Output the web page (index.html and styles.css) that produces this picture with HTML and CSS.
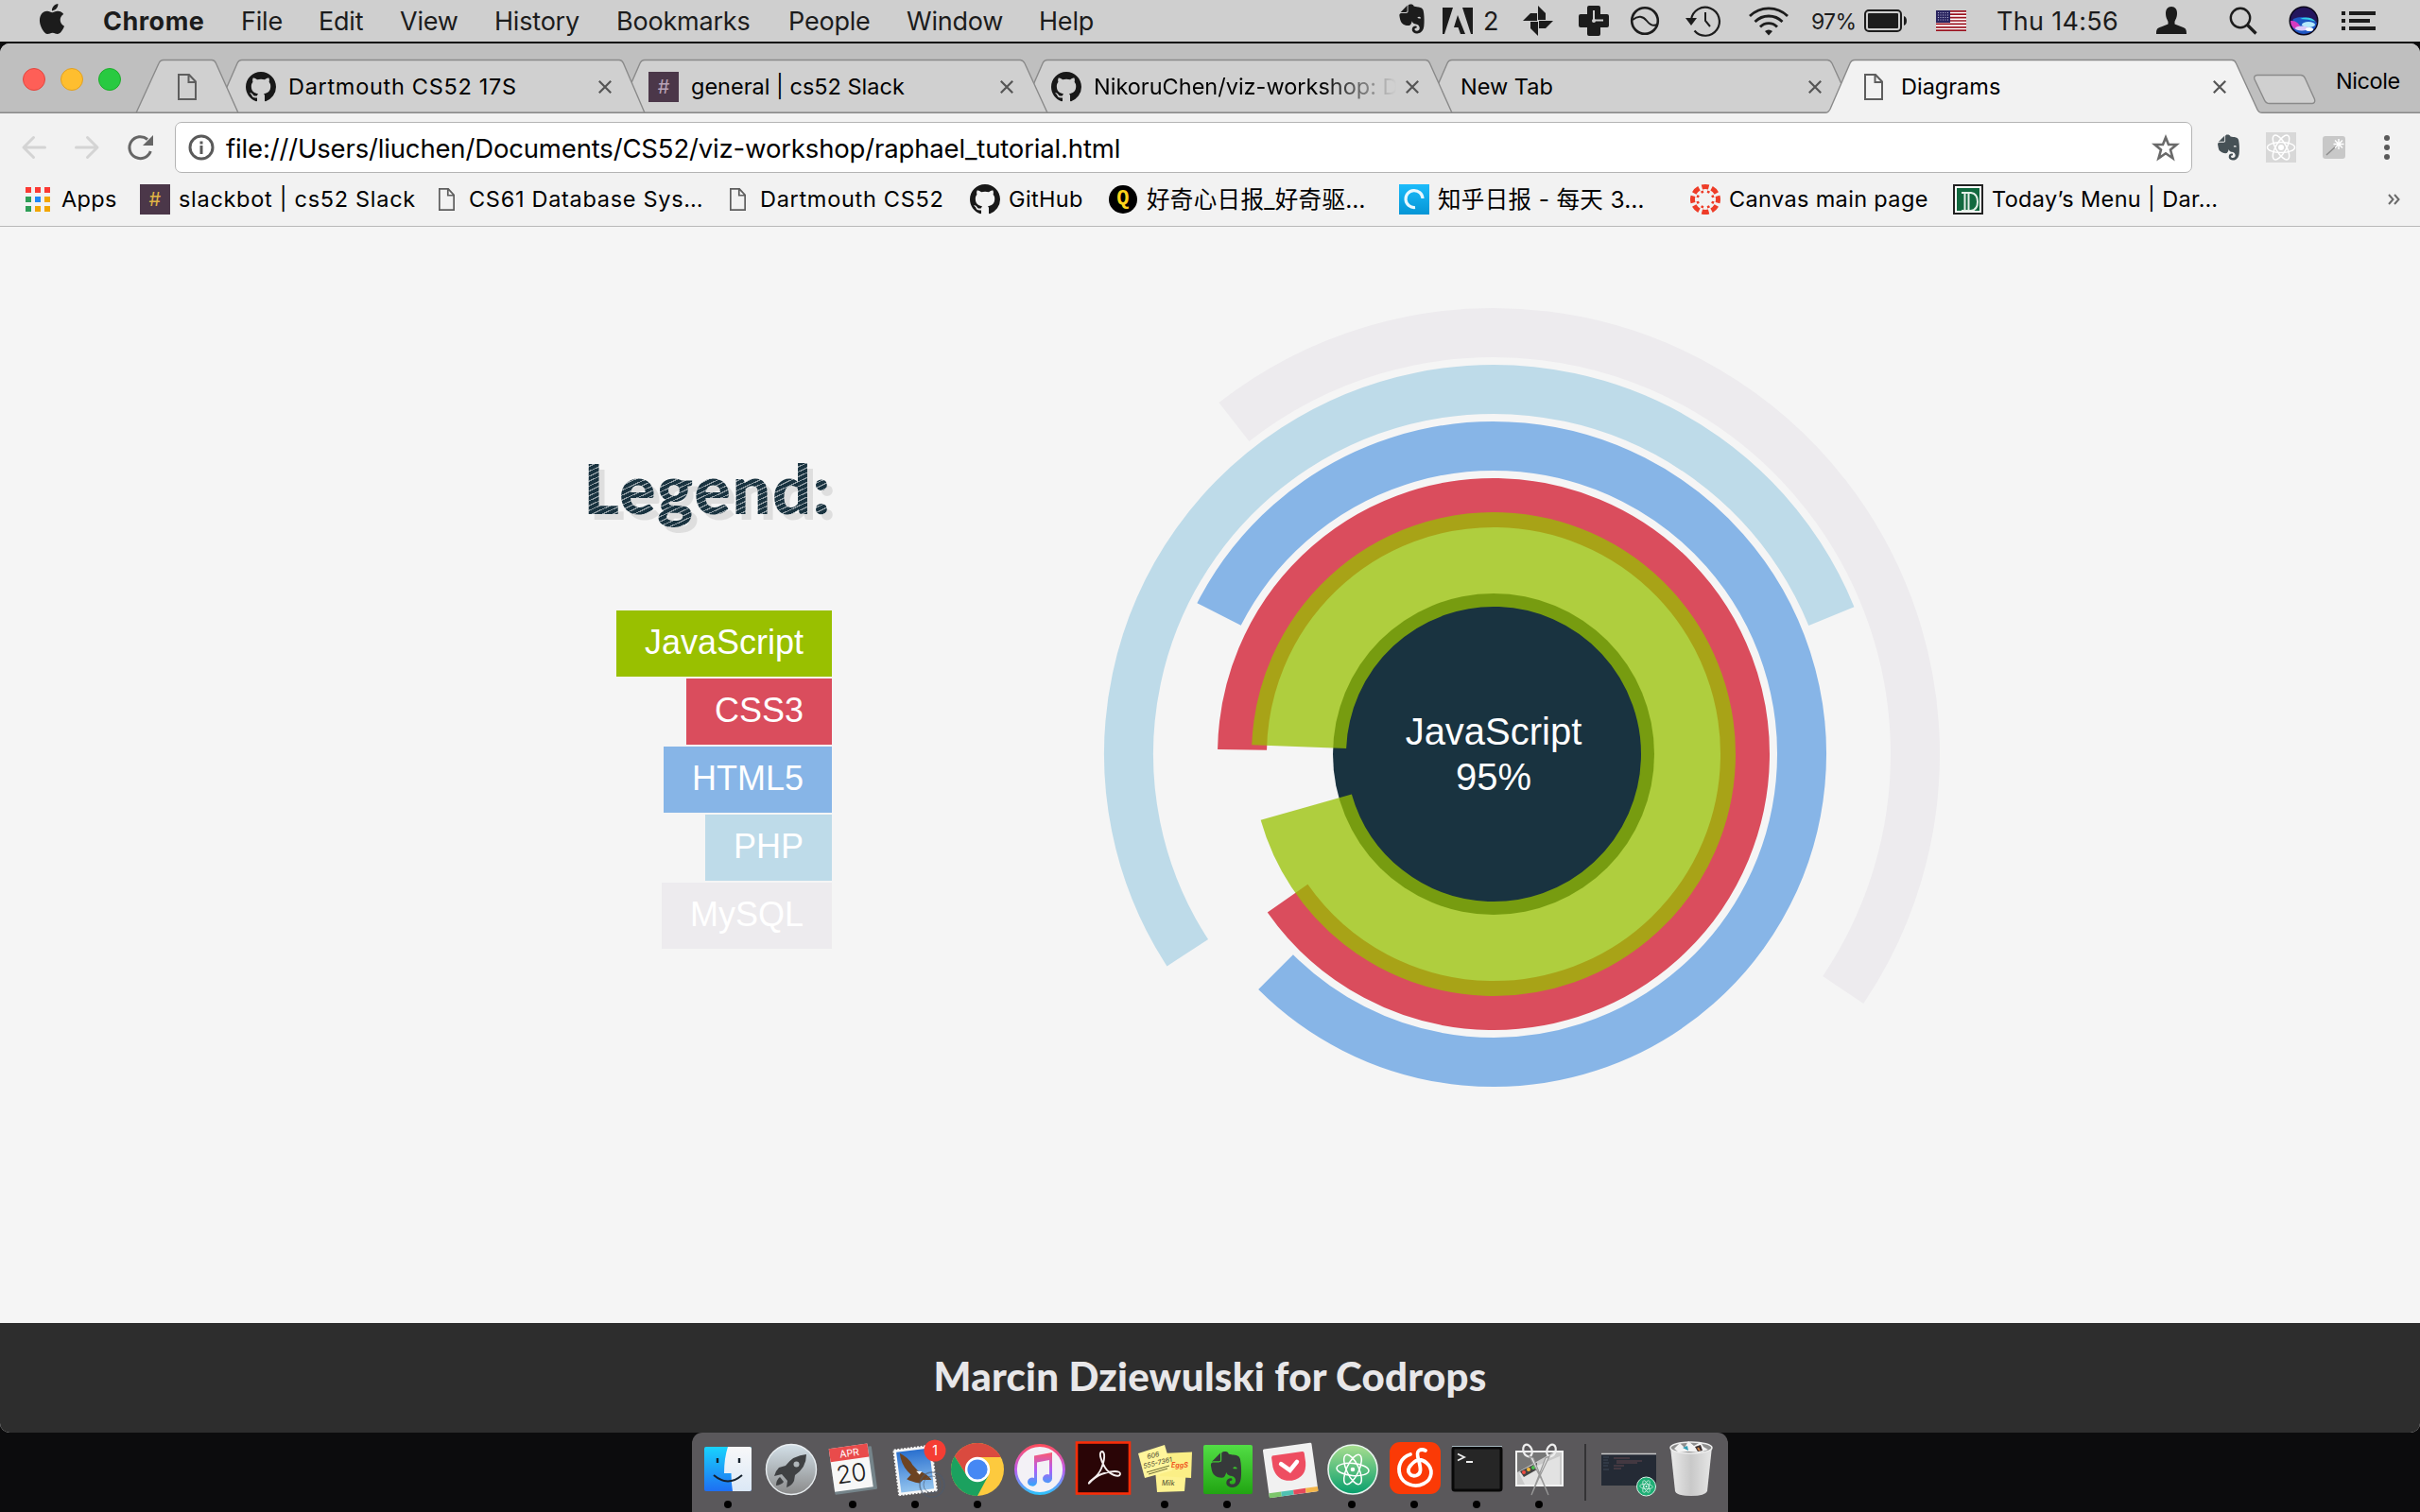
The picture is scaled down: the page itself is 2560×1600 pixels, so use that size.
FILE: index.html
```html
<!DOCTYPE html>
<html lang="en">
<head>
<meta charset="utf-8">
<title>Diagrams</title>
<link rel="stylesheet" href="styles.css">
</head>
<body>
<svg class="defs" width="0" height="0" aria-hidden="true">
  <defs>
    <symbol id="github" viewBox="0 0 16 16"><path d="M8 0C3.58 0 0 3.58 0 8c0 3.54 2.29 6.53 5.47 7.59.4.07.55-.17.55-.38 0-.19-.01-.82-.01-1.49-2.01.37-2.53-.49-2.69-.94-.09-.23-.48-.94-.82-1.13-.28-.15-.68-.52-.01-.53.63-.01 1.08.58 1.23.82.72 1.21 1.87.87 2.33.66.07-.52.28-.87.51-1.07-1.78-.2-3.64-.89-3.64-3.95 0-.87.31-1.59.82-2.15-.08-.2-.36-1.02.08-2.12 0 0 .67-.21 2.2.82.64-.18 1.32-.27 2-.27s1.36.09 2 .27c1.53-1.04 2.2-.82 2.2-.82.44 1.1.16 1.92.08 2.12.51.56.82 1.27.82 2.15 0 3.07-1.87 3.75-3.65 3.95.29.25.54.73.54 1.48 0 1.07-.01 1.93-.01 2.2 0 .21.15.46.55.38A8.01 8.01 0 0 0 16 8c0-4.42-3.58-8-8-8z"/></symbol>
    <symbol id="evernote" viewBox="0 0 24 24"><path d="M8.222 5.393c0 .239-.02.637-.256.895-.257.24-.652.259-.888.259H4.552c-.73 0-1.165 0-1.46.04-.159.02-.356.1-.455.14-.04.019-.04 0-.02-.02L8.38.796c.02-.02.04-.02.02.02-.04.099-.118.298-.138.457-.04.298-.04.736-.04 1.472v2.647zm5.348 17.869c-.67-.438-1.026-1.015-1.164-1.373a2.924 2.924 0 0 1-.217-1.095 3.007 3.007 0 0 1 3-3.004c.493 0 .888.398.888.895a.88.88 0 0 1-.454.776c-.099.06-.237.1-.336.12-.098.02-.473.06-.65.218-.198.16-.356.418-.356.697 0 .298.118.577.316.776.355.358.829.557 1.342.557a2.436 2.436 0 0 0 2.427-2.447c0-1.214-.809-2.29-1.875-2.766-.158-.08-.414-.14-.651-.2a8.04 8.04 0 0 0-.592-.1c-.829-.1-2.901-.755-3.04-2.605 0 0-.611 2.785-1.835 3.54-.118.06-.276.12-.454.16-.177.04-.374.06-.434.06-1.993.12-4.105-.517-5.565-2.03 0 0-.987-.815-1.5-3.103-.118-.558-.355-1.553-.493-2.488-.06-.338-.08-.597-.099-.836 0-.975.592-1.631 1.342-1.73h4.026c.69 0 1.086-.18 1.342-.42.336-.317.415-.775.415-1.312V1.354C9.05.617 9.703 0 10.669 0h.474c.197 0 .434.02.651.04.158.02.296.06.533.12 1.204.298 1.46 1.532 1.46 1.532s2.27.398 3.415.597c1.085.199 3.77.378 4.282 3.104 1.204 6.487.474 12.775.415 12.775-.849 6.129-5.901 5.83-5.901 5.83a4.1 4.1 0 0 1-2.428-.736zm4.54-13.034c-.652-.06-1.204.2-1.402.697-.04.1-.079.219-.059.278.02.06.06.08.099.1.237.12.631.179 1.204.239.572.06.967.1 1.223.06.04 0 .08-.02.119-.08.04-.06.02-.18.02-.278-.06-.557-.553-.936-1.204-1.016z"/></symbol>
    <symbol id="page" viewBox="0 0 20 28"><path d="M1 1H12L19 8.500V27H1ZM11.500 1V9H19" fill="none" stroke="#5e5e5e" stroke-width="2"/></symbol>
    <symbol id="close" viewBox="0 0 14 14"><path d="M.8.800 13.200 13.200M13.200.800.800 13.200" fill="none" stroke="#555" stroke-width="2.200"/></symbol>
    <symbol id="atom" viewBox="-20 -20 40 40"><g fill="none" stroke="#fff" stroke-width="1.500"><ellipse rx="17" ry="6.500" transform="rotate(5)"/><ellipse rx="17" ry="6.500" transform="rotate(65)"/><ellipse rx="17" ry="6.500" transform="rotate(115)"/></g><circle r="2.300" fill="#fff"/></symbol>
    <linearGradient id="silver" x2="0" y2="1"><stop offset="0" stop-color="#d3e0e8"/><stop offset="1" stop-color="#8a8a8a"/></linearGradient>
    <linearGradient id="finderL" x2="0" y2="1"><stop offset="0" stop-color="#19d3fd"/><stop offset="1" stop-color="#1e6ff2"/></linearGradient>
    <linearGradient id="finderR" x2="0" y2="1"><stop offset="0" stop-color="#f8f8f9"/><stop offset="1" stop-color="#dbe8f6"/></linearGradient>
    <linearGradient id="ring" x2="0" y2="1"><stop offset="0" stop-color="#ff4e5f"/><stop offset=".5" stop-color="#c05cf2"/><stop offset="1" stop-color="#2fc0fb"/></linearGradient>
    <linearGradient id="note" x2="0" y2="1"><stop offset="0" stop-color="#fb5a6f"/><stop offset=".5" stop-color="#b35cf5"/><stop offset="1" stop-color="#34a8fb"/></linearGradient>
    <linearGradient id="sky" x2="0" y2="1"><stop offset="0" stop-color="#2a70cf"/><stop offset="1" stop-color="#93c4ef"/></linearGradient>
    <linearGradient id="green" x2="0" y2="1"><stop offset="0" stop-color="#52dd45"/><stop offset="1" stop-color="#21a512"/></linearGradient>
    <linearGradient id="atomBg" x2="0" y2="1"><stop offset="0" stop-color="#a9de8f"/><stop offset="1" stop-color="#079f6d"/></linearGradient>
    <linearGradient id="zhihu" x2="0" y2="1"><stop offset="0" stop-color="#1cbcfb"/><stop offset="1" stop-color="#0595d5"/></linearGradient>
    <linearGradient id="trash" x2="1"><stop offset="0" stop-color="#e9e9e9"/><stop offset=".5" stop-color="#c9c9c9"/><stop offset="1" stop-color="#e6e6e6"/></linearGradient>
  </defs>
</svg>

<header class="menubar">
  <svg class="apple" viewBox="0 0 24 24"><path d="M12.152 6.896c-.948 0-2.415-1.078-3.96-1.040-2.040.027-3.910 1.183-4.961 3.014-2.117 3.675-.546 9.103 1.519 12.090 1.013 1.454 2.208 3.090 3.792 3.039 1.520-.065 2.090-.987 3.935-.987 1.831 0 2.350.987 3.960.948 1.637-.026 2.676-1.480 3.676-2.948 1.156-1.688 1.636-3.325 1.662-3.415-.039-.013-3.182-1.221-3.220-4.857-.026-3.040 2.480-4.494 2.597-4.559-1.429-2.090-3.623-2.324-4.390-2.376-2-.156-3.675 1.090-4.610 1.090zM15.530 3.830c.843-1.012 1.400-2.427 1.245-3.830-1.207.052-2.662.805-3.532 1.818-.78.896-1.454 2.338-1.273 3.714 1.338.104 2.715-.688 3.559-1.701"/></svg>
  <b>Chrome</b><span>File</span><span>Edit</span><span>View</span><span>History</span><span>Bookmarks</span><span>People</span><span>Window</span><span>Help</span>
  <svg class="raised" width="31" height="32"><use href="#evernote" width="31" height="32"/></svg>
  <svg width="32" height="28" viewBox="0 0 32 28"><path d="M0 0H11L2 28H0ZM21 0H32V28H30ZM16 8 24 28H19L16.500 21H12Z"/></svg>
  <span>2</span>
  <svg width="32" height="32" viewBox="-16 -16 32 32"><path d="M0-1V-16L8-8V-1Z"/><path d="M1 0H16L8 8H1Z"/><path d="M0 1V16L-8 8V1Z"/><path d="M-1 0H-16L-8-8H-1Z"/></svg>
  <svg width="32" height="32" viewBox="0 0 32 32"><path d="M11 0h10a2 2 0 0 1 2 2v7h7a2 2 0 0 1 2 2v10a2 2 0 0 1-2 2h-7v7a2 2 0 0 1-2 2H11a2 2 0 0 1-2-2v-7H2a2 2 0 0 1-2-2V11a2 2 0 0 1 2-2h7V2a2 2 0 0 1 2-2Z"/><path d="M16 5V15.500H26" stroke="#cfcfcf" stroke-width="2" fill="none"/><circle cx="16" cy="16" r="2" fill="#cfcfcf"/></svg>
  <svg width="32" height="32" viewBox="0 0 32 32"><g fill="none" stroke="#1c1c1c"><circle cx="16" cy="16" r="13.800" stroke-width="2.600"/><path d="M3 15C9 10 14 11 18 16S25 22 29 20" stroke-width="2"/></g></svg>
  <svg width="38" height="34" viewBox="0 0 38 34"><path d="M6 16A15 15 0 1 1 9.500 27.500" fill="none" stroke="#1c1c1c" stroke-width="2.200"/><path d="M21 8v9l5 6" stroke="#1c1c1c" stroke-width="2" fill="none"/><path d="M0 14H12L6 22Z"/></svg>
  <svg width="42" height="32" viewBox="0 0 42 32"><g fill="none" stroke="#1c1c1c" stroke-width="2.800"><path d="M1 11a28.500 28.500 0 0 1 40 0"/><path d="M6.500 17a20.500 20.500 0 0 1 29 0"/><path d="M12 22.500a12.500 12.500 0 0 1 18 0"/></g><path d="M17 27a6 6 0 0 1 8 0l-4 4.500Z"/></svg>
  <span class="percent">97%</span>
  <svg width="46" height="24" viewBox="0 0 46 24"><rect x="1" y="1" width="38" height="22" rx="4" fill="none" stroke="#1c1c1c" stroke-width="2"/><rect x="4" y="4" width="32" height="16" rx="1"/><path d="M42 7q3 1 3 5t-3 5Z"/></svg>
  <svg width="32" height="22" viewBox="0 0 32 22"><path fill="#fff" d="M0 0h32v22H0z"/><path stroke="#9b1521" stroke-width="1.700" d="M0 .850h32M0 4.200h32M0 7.600h32M0 11h32M0 14.400h32M0 17.800h32M0 21.150h32"/><path fill="#2a2560" d="M0 0h15v13H0z"/><path d="M2 2.500h12M2 5h12M2 7.500h12M2 10h12" stroke="#b9b9d6" stroke-width="1" stroke-dasharray="1 1.500"/></svg>
  <span class="clock">Thu 14:56</span>
  <svg width="32" height="30" viewBox="0 0 32 30"><path d="M16 0c4 0 6 3 6 7 0 5-2 7-2.500 9v2.500l9 3.500c3 1 3.500 3 3.500 7H0c0-4 .5-6 3.500-7l9-3.500V16C12 14 10 12 10 7c0-4 2-7 6-7Z"/></svg>
  <svg width="30" height="30" viewBox="0 0 30 30"><circle cx="12" cy="12" r="10.200" fill="none" stroke="#1c1c1c" stroke-width="2.400"/><path d="M19 19 28.500 28.500" stroke="#1c1c1c" stroke-width="3.200"/></svg>
  <svg width="32" height="32" viewBox="0 0 32 32"><circle cx="16" cy="16" r="15.500" fill="#0b0718"/><circle cx="16" cy="16" r="14" fill="#24165e"/><path d="M5 14Q14 10 22 14T30 18Q28 29 16 30 5 29 3 20" fill="#1d58c4"/><path d="M2 16Q10 15 14 25L7 25Q2 22 2 16" fill="#d63ac0"/><path d="M12 14Q22 10 29 17 21 14 12 14" fill="#35d0e8"/><ellipse cx="21" cy="20" rx="7" ry="3" fill="#b5e9fb"/><ellipse cx="14" cy="24" rx="7" ry="2.500" fill="#d9c8fa"/><ellipse cx="22" cy="25" rx="4" ry="2" fill="#fff"/></svg>
  <svg width="36" height="20" viewBox="0 0 36 20"><path d="M0 0h4v4H0zM8 0h28v4H8zM0 8h4v4H0zM8 8h22v4H8zM0 16h4v4H0zM8 16h28v4H8z"/></svg>
</header>

<div class="window">
  <div class="tabstrip">
    <svg class="tabshapes" width="2560" height="74" viewBox="0 46 2560 74">
      <g fill="#d0d0d0" stroke="#8a8a8a" stroke-width="1.400">
        <path d="M1508 119.500 1531 67Q1532.500 63.500 1536 63.500H1933Q1936 63.500 1938 67L1962 119.500Z"/>
        <path d="M1080 119.500 1103 67Q1104.500 63.500 1108 63.500H1508Q1511 63.500 1512.500 67L1536 119.500Z"/>
        <path d="M654 119.500 677 67Q678.500 63.500 682 63.500H1079Q1082 63.500 1084 67L1108 119.500Z"/>
        <path d="M228 119.500 251 67Q252.500 63.500 256 63.500H655Q658 63.500 659.500 67L682 119.500Z"/>
        <path d="M144 119.500 168 67Q169.500 63.500 173 63.500H224Q227 63.500 228.500 67L252 119.500Z"/>
        <path d="M2388 79.500H2434Q2437 79.500 2438.500 83L2448.500 105Q2449.500 109 2446 109.500H2401Q2397 109.500 2395.500 106L2385 84Q2383.500 80 2388 79.500Z"/>
      </g>
      <path d="M-5 119.300H1931Q1934 119.300 1936 115.500L1957 67Q1958.500 63.500 1962 63.500H2361Q2364 63.500 2365.500 67L2388 116Q2389.500 119.300 2393 119.300H2565V130H-5Z" fill="#f2f2f2" stroke="#8a8a8a" stroke-width="1.400"/>
    </svg>
    <i class="light red"></i><i class="light yellow"></i><i class="light green"></i>
    <svg width="20" height="28"><use href="#page"/></svg>
    <svg width="32" height="32" fill="#181818"><use href="#github"/></svg>
    <span class="loose">Dartmouth CS52 17S</span>
    <svg width="14" height="14"><use href="#close"/></svg>
    <span class="hash">#</span>
    <span>general | cs52 Slack</span>
    <svg width="14" height="14"><use href="#close"/></svg>
    <svg width="32" height="32" fill="#181818"><use href="#github"/></svg>
    <span class="faded">NikoruChen/viz-workshop: D</span>
    <svg width="14" height="14"><use href="#close"/></svg>
    <span>New Tab</span>
    <svg width="14" height="14"><use href="#close"/></svg>
    <svg width="20" height="28"><use href="#page"/></svg>
    <span>Diagrams</span>
    <svg width="14" height="14"><use href="#close"/></svg>
    <span class="profile">Nicole</span>
  </div>

  <div class="toolbar">
    <svg width="26" height="24" viewBox="0 0 26 24" fill="none" stroke="#d4d4d4" stroke-width="3" stroke-linecap="round" stroke-linejoin="round"><path d="M12.500 1.500 2 12 12.500 22.500M2 12H24.500"/></svg>
    <svg width="26" height="24" viewBox="0 0 26 24" fill="none" stroke="#d4d4d4" stroke-width="3" stroke-linecap="round" stroke-linejoin="round"><path d="M13.500 1.500 24 12 13.500 22.500M24 12H1.500"/></svg>
    <svg width="28" height="28" viewBox="0 0 28 28"><path d="M21 5.500A11.500 11.500 0 1 0 24.300 18" fill="none" stroke="#666" stroke-width="3"/><path d="M27 1V12H16Z" fill="#666"/></svg>
    <div class="omnibox">
      <svg width="28" height="28" viewBox="0 0 28 28"><circle cx="14" cy="14" r="12" fill="none" stroke="#5a5a5a" stroke-width="3"/><path d="M12.500 12h3v9h-3zM12.500 7.500h3v3h-3z" fill="#5a5a5a"/></svg>
      <span>file:///Users/liuchen/Documents/CS52/viz-workshop/raphael_tutorial.html</span>
      <svg width="30" height="28" viewBox="0 0 30 28"><path d="M15 3.500 18 11H26.500L20 16.500 22.500 25.500 15 20.300 7.500 25.500 10 16.500 3.500 11H12Z" fill="none" stroke="#6a6a6a" stroke-width="2.600"/></svg>
    </div>
    <svg width="27" height="30" fill="#465156"><use href="#evernote"/></svg>
    <svg width="32" height="32" viewBox="-16 -16 32 32"><path d="M-16-16h32v32h-32z" fill="#d8d8d8"/><g fill="none" stroke="#fff" stroke-width="1.500"><ellipse rx="14.500" ry="5.500"/><ellipse rx="14.500" ry="5.500" transform="rotate(60)"/><ellipse rx="14.500" ry="5.500" transform="rotate(120)"/></g><circle r="3" fill="#fff"/></svg>
    <svg width="24" height="24" viewBox="0 0 24 24"><rect width="24" height="24" rx="3" fill="#c8c8c8"/><path d="M4 20 15 10" stroke="#8e8e8e" stroke-width="1.600"/><path d="M17 3v11M11.500 8.500h11M13 4.500l8 8M21 4.500l-8 8" stroke="#fff" stroke-width="1.400"/></svg>
    <svg width="6" height="26" viewBox="0 0 6 26" fill="#5a5a5a"><circle cx="3" cy="3" r="3"/><circle cx="3" cy="13" r="3"/><circle cx="3" cy="23" r="3"/></svg>
  </div>

  <nav class="bookmarks">
    <svg width="26" height="26" viewBox="0 0 26 26"><path fill="#fb3a34" d="M0 0h6v6H0zM10 0h6v6h-6zM20 0h6v6h-6z"/><path fill="#2f9e57" d="M0 10h6v6H0zM0 20h6v6H0z"/><path fill="#1e88f5" d="M10 10h6v6h-6z"/><path fill="#f2a600" d="M20 10h6v6h-6zM10 20h6v6h-6zM20 20h6v6h-6z"/></svg>
    <span>Apps</span>
    <span class="hash gold">#</span>
    <span class="loose">slackbot | cs52 Slack</span>
    <svg width="17" height="24"><use href="#page"/></svg>
    <span class="loose">CS61 Database Sys…</span>
    <svg width="17" height="24"><use href="#page"/></svg>
    <span class="loose">Dartmouth CS52</span>
    <svg width="32" height="32" fill="#181818"><use href="#github"/></svg>
    <span>GitHub</span>
    <span class="qdaily">Q</span>
    <span class="cjk">好奇心日报_好奇驱…</span>
    <svg width="32" height="32" viewBox="0 0 32 32"><path d="M0 0h32v32H0z" fill="url(#zhihu)"/><path d="M25 15A9 9 0 1 0 17 24.500" fill="none" stroke="#e8f8ff" stroke-width="3.200"/></svg>
    <span class="cjk">知乎日报 - 每天 3…</span>
    <svg width="32" height="32" viewBox="-16 -16 32 32"><circle r="13.500" fill="none" stroke="#ee3c28" stroke-width="5" pathLength="80" stroke-dasharray="7 3" stroke-dashoffset="3.500"/><circle r="8.500" fill="none" stroke="#ee3c28" stroke-width="2.600" pathLength="80" stroke-dasharray="4 6" stroke-dashoffset="-3"/></svg>
    <span>Canvas main page</span>
    <svg width="32" height="32" viewBox="0 0 32 32"><path d="M1 1h30v30H1z" fill="#fff" stroke="#222" stroke-width="2"/><path d="M4 4h24v24H4z" fill="#12693f"/><path d="M9 9H19Q26 10 26 18.500T19 28H9M12.500 9V28M16.500 9V28" fill="none" stroke="#e4efe8" stroke-width="2"/></svg>
    <span>Today’s Menu | Dar…</span>
    <svg width="13" height="12" viewBox="0 0 13 12" fill="none" stroke="#6a6a6a" stroke-width="2"><path d="M1 1 5.500 6 1 11M7 1 11.500 6 7 11"/></svg>
  </nav>

  <main class="content">
    <section class="legend">
      <h1>Legend:</h1>
      <ul>
        <li class="js">JavaScript</li>
        <li class="css">CSS3</li>
        <li class="html">HTML5</li>
        <li class="php">PHP</li>
        <li class="sql">MySQL</li>
      </ul>
    </section>
    <svg class="diagram" width="960" height="960" viewBox="-480 -480 960 960">
      <circle r="170" fill="#193340"/>
      <g fill="none" stroke-width="52">
        <circle r="446" pathLength="360" stroke="#edebee" stroke-dasharray="162 198" transform="rotate(232)"/>
        <circle r="386" pathLength="360" stroke="#bedbe9" stroke-dasharray="190.800 169.200" transform="rotate(147)"/>
        <circle r="326" pathLength="360" stroke="#87b5e7" stroke-dasharray="288 72" transform="rotate(207)"/>
        <circle r="266" pathLength="360" stroke="#da4d5d" stroke-dasharray="324 36" transform="rotate(181)"/>
        <circle r="206" pathLength="360" stroke="#97c000" stroke-opacity=".75" stroke-width="100" stroke-dasharray="342 18" transform="rotate(182.200)"/>
      </g>
      <text y="-10">JavaScript</text>
      <text y="38">95%</text>
    </svg>
  </main>
  <footer class="credits"><p>Marcin Dziewulski for Codrops</p></footer>
</div>

<nav class="dock">
  <div class="app running"><svg viewBox="0 0 66 66"><rect x="8" y="9" width="50" height="47" rx="2" fill="url(#finderL)"/><path d="M33 9H56a2 2 0 0 1 2 2V54a2 2 0 0 1-2 2H38Q36.500 47 36.500 37H29Q29 21 33 9Z" fill="url(#finderR)"/><path d="M22 21v5M45 21v5" stroke="#15202c" stroke-width="2.400"/><path d="M18 39Q33 52 48 39" fill="none" stroke="#15202c" stroke-width="2"/></svg></div>
  <div class="app"><svg viewBox="0 0 66 66"><circle cx="34" cy="33" r="26.500" fill="url(#silver)" stroke="#e8edf0" stroke-width="1.400"/><path d="M50 17Q36 18 28 29L21 31Q17 35 16 40L24 38 30 45 29 52Q35 50 37 45L38 39Q50 31 50 17Z" fill="#3f4143"/><circle cx="39.500" cy="27.500" r="3" fill="#b0b6ba"/><path d="M22 41Q18 44 18 50 24 49 26 46" fill="#3f4143"/></svg></div>
  <div class="app running"><svg viewBox="0 0 66 66"><g transform="rotate(-8 33 33)"><rect x="11" y="11" width="45" height="46" rx="1" fill="#75848a"/><rect x="11" y="8" width="41" height="46" fill="#f7f7f7"/><path d="M11 8h41v14H11z" fill="#e94b4b"/><text class="cal-month" x="32" y="19">APR</text><text class="cal-day" x="31" y="46">20</text></g></svg></div>
  <div class="app running"><svg viewBox="0 0 66 66"><g transform="rotate(-7 33 33)"><rect x="12" y="9" width="42" height="50" fill="#f7f7f7"/><rect x="12" y="9" width="42" height="50" fill="none" stroke="#5a585b" stroke-width="2" stroke-dasharray="1.500 2"/><rect x="15.500" y="12.500" width="35" height="43" fill="url(#sky)"/><path d="M19 14Q28 20 31 28L36 35Q44 38 49 46L40 45 36 48Q27 45 23 42L28 38 25 34Q19 26 19 14Z" fill="#6d4322"/><path d="M34 35 40 36 37 39Z" fill="#fff"/></g><circle cx="51" cy="49" r="13" fill="none" stroke="#4b5a70" stroke-opacity=".6" stroke-width="1.500"/><circle cx="51" cy="49" r="9" fill="none" stroke="#4b5a70" stroke-opacity=".6"/><circle cx="54" cy="13" r="11.500" fill="#f53d34"/><text class="badge" x="54" y="18">1</text></svg></div>
  <div class="app running"><svg viewBox="-33 -33 66 66"><circle r="28" fill="#fdca3e"/><path d="M-24.250-14A28 28 0 0 1 24.250-14L24.600-13H0L-11.300 6.500Z" fill="#da4a3f"/><path d="M-24.250-14A28 28 0 0 0 0 28L11.500 6.500-11.300 6.500Z" fill="#1ba15f"/><circle r="13.200" fill="#fff"/><circle r="10.600" fill="#4688f4"/></svg></div>
  <div class="app"><svg viewBox="0 0 66 66"><circle cx="33" cy="33" r="25.500" fill="#f3f1f6" stroke="url(#ring)" stroke-width="2.800"/><path d="M27 18.500 46 15V42.500a5 4.500 0 1 1-3-4V23L30 25.500V46a5 4.500 0 1 1-3-4Z" fill="url(#note)"/></svg></div>
  <div class="app"><svg viewBox="0 0 66 66"><rect x="6" y="4.500" width="56" height="54" fill="#2a0506" stroke="#fa2d08" stroke-width="2.600"/><path d="M33 14C29 14 31 23 36 31S51 42 52 38 42 34 32 38 18 50 19 47 28 42 32 32 36 15 33 14Z" fill="none" stroke="#f4eeee" stroke-width="1.900"/></svg></div>
  <div class="app running"><svg viewBox="0 0 66 66"><path d="M23 33 56 32 54 56 25 57Z" fill="#fdf291"/><path d="M30 16 62 14.500 61 42 28 40Z" fill="#fbef86"/><path d="M5 16 33 7 41 34 12 42Z" fill="#fff59c"/><g class="scrawl"><text x="15" y="22" transform="rotate(-14 15 22)">606</text><text x="11" y="32" transform="rotate(-14 11 32)">555-7361</text><text class="hot" x="40" y="31">EggS</text><text x="30" y="50">Milk</text></g><path d="M14 36 38 29M16 38 36 32" stroke="#6a6a35"/></svg></div>
  <div class="app running"><svg viewBox="0 0 66 66"><rect x="8" y="7" width="52" height="52" rx="2" fill="url(#green)"/><use href="#evernote" x="13" y="13" width="38" height="40" fill="#36393a"/></svg></div>
  <div class="app"><svg viewBox="0 0 66 66"><g transform="rotate(-8 33 33)"><rect x="8" y="8" width="52" height="52" rx="1.500" fill="#f1f1f1"/><path d="M8 55h13v5H8z" fill="#7cc66b"/><path d="M21 55h13v5H21z" fill="#4fc2b2"/><path d="M34 55h13v5H34z" fill="#e44a5b"/><path d="M47 55h13v5H47z" fill="#f4b64b"/><path d="M17 16H49a2 2 0 0 1 2 2V28Q50 44 34 45 18 44 16 28V18Z" fill="#ee4d61"/><path d="M25 26 33.500 34 42 26" fill="none" stroke="#fff" stroke-width="4.500" stroke-linecap="round"/></g></svg></div>
  <div class="app running"><svg viewBox="0 0 66 66"><circle cx="34" cy="33" r="26" fill="url(#atomBg)" stroke="#e8f4ee" stroke-width="1.600"/><use href="#atom" x="14" y="13" width="40" height="40"/></svg></div>
  <div class="app running"><svg viewBox="0 0 66 66"><rect x="7" y="4" width="54" height="55" rx="11" fill="#fb3a06"/><path d="M29 17C19 20 15 30 18 39S33 53 43 48 53 32 46 26 34 23 29 29 29 41 35 39.500 40 32 38 24Q35 15 38 13T45 13" fill="none" stroke="#fff" stroke-width="3.800" stroke-linecap="round"/></svg></div>
  <div class="app running"><svg viewBox="0 0 66 66"><rect x="8" y="10" width="51" height="45" rx="2" fill="#262626" stroke="#080808" stroke-width="3"/><path d="M7 8.500H60" stroke="#a6b8c0" stroke-width="1.200"/><path d="M13 16.500 20 20 13 23.500M22 25H29" fill="none" stroke="#eee" stroke-width="1.800"/></svg></div>
  <div class="app running"><svg viewBox="0 0 66 66"><rect x="9" y="14" width="49" height="36" fill="#c9c9c9" stroke="#f2f2f2" stroke-width="2"/><path d="M10 15H48L10 36Z" fill="#777"/><path d="M12 37 55 19V49H18Z" fill="#e2e2e2"/><path d="M13 35 31 26V33L17 41Z" fill="#444"/><circle cx="17" cy="36" r="2" fill="#f04b40"/><circle cx="22" cy="33" r="2" fill="#f5b63a"/><circle cx="27" cy="31" r="2" fill="#49c14b"/><g fill="none" stroke="#ededed" stroke-width="2.200"><ellipse cx="21" cy="13" rx="4.500" ry="6.500" transform="rotate(-20 21 13)"/><ellipse cx="46" cy="13" rx="4.500" ry="6.500" transform="rotate(20 46 13)"/></g><path d="M23 19 27 21 43 60 36 44ZM44 19 40 21 25 60 32 44Z" fill="#e9e9e9" stroke="#999" stroke-width="1.200"/></svg></div>
  <i class="divider"></i>
  <div class="app"><svg viewBox="0 0 66 66"><rect x="4" y="16" width="58" height="34" fill="#242a35"/><path d="M4 16.500h58" stroke="#c9c9c9" stroke-width="1.400"/><path d="M6 20h6M6 23h5M6 26h6M6 29h5M6 33h6" stroke="#3d4657"/><path d="M17 21h17M20 24h27M20 26h22M17 29h11M17 32h8" stroke="#63464f"/><circle cx="51.500" cy="51" r="10" fill="#1fae75" stroke="#d6efe4"/><use href="#atom" x="43.500" y="43" width="16" height="16"/></svg></div>
  <div class="app"><svg viewBox="0 0 66 66"><path d="M11 9H55L50 56Q48 61 33 61T16 56Z" fill="url(#trash)"/><ellipse cx="33" cy="10" rx="22" ry="6" fill="#8d8d8d" stroke="#ececec" stroke-width="1.500"/><path d="M15 11 21 5 26 10 30 3 36 8 43 4 46 9 51 12 42 15 30 14 20 15Z" fill="#f2f2f2"/><path d="M24 10 29 8 30 13Z" fill="#2f9cb4"/><path d="M37 9 43 7 45 13 40 14Z" fill="#3b3030"/><path d="M40 10 42 13" stroke="#d08040" stroke-width="2"/></svg></div>
</nav>
</body>
</html>
```
FILE: styles.css
```css
* { box-sizing: border-box; margin: 0; padding: 0; }

html, body { height: 100%; }

body {
  display: flex;
  flex-direction: column;
  width: 2560px;
  height: 1600px;
  overflow: hidden;
  background: #0c0c0d;
  font-family: Inter, "Noto Sans CJK SC", sans-serif;
  color: #000;
}

svg { display: block; overflow: visible; }
.defs { position: absolute; }

/* System menu bar: one column per menu title or status icon */
.menubar {
  display: grid;
  grid-template-columns: 70px 146px 82px 86px 100px 129px 182px 125px 140px 379px 48px 43px 42px 59px 54px 59px 67px 66px 56px 76px 64px 169px 77px 63px 56px 40px;
  align-items: center;
  height: 44px;
  padding-left: 39px;
  background: #cfcfcf;
  color: #1c1c1c;
  font-size: 27px;
  letter-spacing: -.2px;
  line-height: 42px;
  white-space: nowrap;
}
.menubar span, .menubar b { padding-top: 2px; }
.menubar b { letter-spacing: .5px; }
.menubar svg { fill: #1c1c1c; }
.menubar .apple { width: 32px; height: 32px; margin-top: -4px; }
.menubar .raised { margin-top: -4px; }
.menubar .percent { font-size: 23px; letter-spacing: -.7px; }
.menubar .clock { letter-spacing: .3px; }

.window {
  display: flex;
  flex-direction: column;
  height: 1470px;
  margin-top: 2px;
  border-radius: 10px;
  overflow: hidden;
  background: #f5f5f5;
}

/* Tabs */
.tabstrip {
  position: relative;
  display: grid;
  grid-template-columns: 40px 40px 84px 72px 45px 328px 53px 45px 327px 54px 45px 330px 58px 368px 59px 39px 330px 130px 80px;
  align-items: center;
  height: 74px;
  padding: 23px 0 5px 24px;
  background: #bfbfbf;
  font-size: 23.500px;
  line-height: 46px;
  white-space: nowrap;
}
.tabshapes { position: absolute; left: 0; top: 0; overflow: hidden; }
.tabstrip > :not(.tabshapes) { position: relative; }
.loose { letter-spacing: .7px; }
.light { width: 24px; height: 24px; margin-top: -16px; border: 1px solid; border-radius: 50%; }
.red { background: #fe5f57; border-color: #e2463f; }
.yellow { background: #febe2f; border-color: #e0a023; }
.green { background: #28ca41; border-color: #1dad2b; }
.faded {
  width: 320px;
  background: linear-gradient(90deg, #000 75%, rgba(0, 0, 0, 0) 100%);
  background-clip: text;
  color: transparent;
}
.profile { margin-top: -12px; letter-spacing: -.4px; }
.hash {
  width: 32px;
  height: 32px;
  background: #4b3749;
  color: #b9a3b8;
  font-size: 20px;
  line-height: 32px;
  text-align: center;
}
.hash.gold { color: #e0b545; }

/* Address bar row */
.toolbar {
  display: flex;
  align-items: center;
  height: 72px;
  padding-left: 23px;
  background: #f2f2f2;
}
.toolbar > svg:nth-child(2) { margin-left: 30px; }
.toolbar > svg:nth-child(3) { margin-left: 30px; }
.omnibox {
  display: grid;
  grid-template-columns: 40px 2037px 30px;
  align-items: center;
  width: 2134px;
  height: 54px;
  margin: 0 25px 0 22px;
  padding-left: 13px;
  border: 1px solid #b4b4b4;
  border-radius: 7px;
  background: #fff;
  font-size: 27.500px;
  letter-spacing: -.16px;
  white-space: nowrap;
}
.omnibox span { padding-top: 2px; }
.omnibox + svg { margin-right: 26px; }
.omnibox + svg + svg { margin-right: 28px; }
.omnibox + svg + svg + svg { margin-right: 41px; }

/* Bookmarks row */
.bookmarks {
  display: grid;
  grid-template-columns: 38px 83px 41px 275px 32px 276px 32px 222px 41px 106px 40px 267px 41px 267px 41px 237px 41px 419px 20px;
  align-items: center;
  height: 48px;
  padding: 0 0 10px 27px;
  border-bottom: 1px solid #b8b8b8;
  background: #f2f2f2;
  font-size: 23.500px;
  letter-spacing: .35px;
  line-height: 38px;
  white-space: nowrap;
}
.bookmarks .loose { letter-spacing: .7px; }
.bookmarks .cjk { font-size: 24.500px; letter-spacing: .35px; }
.qdaily {
  width: 30px;
  height: 30px;
  border-radius: 50%;
  background: #000;
  color: #ffd21c;
  font: bold 22px/30px "Liberation Mono", monospace;
  text-align: center;
}

/* Page */
.content { display: flex; height: 1160px; }
.legend {
  display: flex;
  flex-direction: column;
  align-items: flex-end;
  width: 880px;
  padding-top: 226px;
}
.legend h1 {
  height: 100px;
  background: repeating-linear-gradient(155deg, #193340 0 3.500px, #8f9ba2 3.500px 4.700px);
  background-clip: text;
  color: transparent;
  filter: drop-shadow(6px 6px 0 #dedede);
  font: 900 72px/100px Lato, sans-serif;
  letter-spacing: 1.600px;
  white-space: nowrap;
}
.legend ul { display: flex; flex-direction: column; align-items: flex-end; gap: 2px; margin-top: 80px; list-style: none; }
.legend li {
  height: 70px;
  padding: 0 30px;
  color: #fff;
  font: 36px/68px "Liberation Sans", Arial, sans-serif;
}
.js { background: #99c000; }
.css { background: #da4d5d; }
.html { background: #87b5e7; }
.php { background: #bedbe9; }
.sql { background: #edebee; }

.diagram { margin: 78px 0 0 220px; }
.diagram text { fill: #fff; font: 40px "Liberation Sans", Arial, sans-serif; text-anchor: middle; }

.credits {
  height: 116px;
  background: #2d2d2d;
  color: #e8e7e9;
  font: 900 42px/112px Lato, sans-serif;
  letter-spacing: .25px;
  text-align: center;
}

/* Dock */
.dock {
  display: flex;
  align-self: center;
  width: 1096px;
  height: 84px;
  padding: 6px 5px 0;
  border-radius: 11px 11px 0 0;
  background: #5a585b;
}
.app { width: 66px; }
.app svg { width: 66px; height: 66px; }
.running::after {
  display: block;
  width: 8px;
  height: 8px;
  margin: 0 auto;
  border-radius: 50%;
  background: #000;
  content: "";
}
.divider { width: 2px; height: 60px; margin: 6px 12px 0 15px; background: #343335; }
.cal-month { fill: #fff; font: 10.500px Inter, sans-serif; text-anchor: middle; }
.cal-day { fill: #222; font: 300 26px Inter, sans-serif; text-anchor: middle; }
.badge { fill: #fff; font: 14px Inter, sans-serif; text-anchor: middle; }
.scrawl { fill: #4a4a30; font: italic 7px Inter, sans-serif; }
.scrawl .hot { fill: #f0561e; font-weight: bold; }
```
